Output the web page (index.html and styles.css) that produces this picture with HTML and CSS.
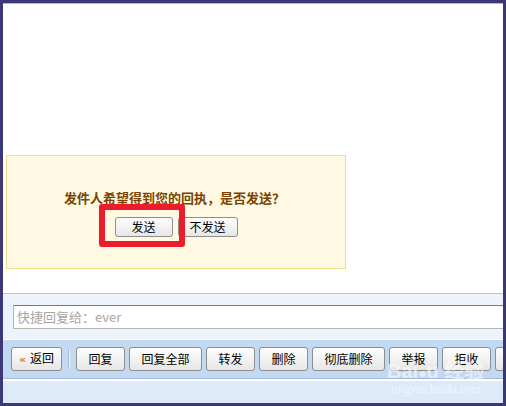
FILE: index.html
```html
<!DOCTYPE html>
<html lang="zh-CN">
  <head>
    <meta charset="UTF-8" />
    <title>回执</title>
    <link rel="stylesheet" href="styles.css">
  </head>
  <body>
    <div class="window">

      <div class="content">
        <div class="receipt-box">
          <div class="receipt-title">发件人希望得到您的回执，是否发送？</div>
          <div class="receipt-actions">
            <span class="mark-wrap">
              <button class="btn btn-send">发送</button>
              <span class="red-mark"></span>
            </span>
            <button class="btn btn-nosend">不发送</button>
          </div>
        </div>
      </div>

      <div class="quick-reply">
        <div class="reply-input">快捷回复给：ever</div>
      </div>

      <div class="toolbar">
        <button class="btn btn-back"><span class="back-arrow">«</span>返回</button>
        <span class="sep"></span>
        <button class="btn">回复</button>
        <button class="btn btn-wide">回复全部</button>
        <button class="btn">转发</button>
        <button class="btn">删除</button>
        <button class="btn btn-wide">彻底删除</button>
        <button class="btn">举报</button>
        <button class="btn">拒收</button>
        <button class="btn"></button>
        <div class="watermark">
          <span class="wm-logo">Bai<span class="paw">&#9679;</span>u 经验</span>
          <span class="wm-url">jingyan.baidu.com</span>
        </div>
      </div>

      <div class="footer-bar"></div>

    </div>
  </body>
</html>
```

FILE: styles.css
```css
* {
  box-sizing: border-box;
}
body {
  margin: 0;
  padding: 3px;
  width: 506px;
  height: 406px;
  background-color: #3c3878;
  font-family: 'Liberation Sans', 'Noto Sans CJK SC', sans-serif;
  font-size: 12px;
  overflow: hidden;
}
.window {
  height: 400px;
  display: flex;
  flex-direction: column;
  background-color: #fff;
  border-top: 1px solid #a9bde0;
  overflow: hidden;
}
.content {
  height: 289px;
  flex-shrink: 0;
  padding: 151px 0 0 3px;
}
.receipt-box {
  width: 340px;
  height: 114px;
  padding-top: 34px;
  background-color: #fff8e3;
  border: 1px solid #f5dc8c;
  display: flex;
  flex-direction: column;
  align-items: center;
}
.receipt-title {
  height: 16px;
  line-height: 16px;
  font-family: 'Noto Sans CJK SC', sans-serif;
  font-size: 13px;
  font-weight: bold;
  color: #7a4400;
  margin-left: -3px;
}
.receipt-actions {
  display: flex;
  gap: 5px;
  margin-top: 11px;
}
.mark-wrap {
  position: relative;
  display: flex;
}
.red-mark {
  position: absolute;
  left: -16px;
  top: -13px;
  width: 86px;
  height: 43px;
  border: 6px solid #ec1c2a;
  border-radius: 3px;
}
.btn {
  flex-shrink: 0;
  height: 24px;
  width: 49px;
  padding: 0;
  border: 1px solid #8e8e8e;
  border-radius: 3px;
  background: linear-gradient(#ffffff, #e6e6e6);
  font-family: 'Noto Sans CJK SC', sans-serif;
  font-size: 12px;
  color: #000;
  line-height: 20px;
}
.btn-send {
  width: 58px;
  height: 20px;
  line-height: 16px;
}
.btn-nosend {
  width: 60px;
  height: 20px;
  line-height: 16px;
}
.quick-reply {
  height: 47px;
  flex-shrink: 0;
  padding: 11px 0 0 10px;
  background-color: #edf3fb;
  border-top: 1px solid #b2c5e1;
  border-bottom: 1px solid #fff;
}
.reply-input {
  width: 500px;
  height: 24px;
  padding-left: 3px;
  line-height: 22px;
  font-family: 'Noto Sans CJK SC', sans-serif;
  font-size: 13px;
  color: #a6a6a6;
  background-color: #fff;
  border: 1px solid #b5b5b5;
  border-top-color: #7a7a7a;
}
.toolbar {
  position: relative;
  height: 39px;
  display: flex;
  align-items: center;
  gap: 4px;
  padding: 0 0 0 8px;
  background-color: #c3d9f2;
  border-bottom: 1px solid #a3b9d9;
  flex-shrink: 0;
}
.btn-back {
  width: 51px;
}
.back-arrow {
  color: #e07a10;
  font-family: 'DejaVu Sans', sans-serif;
  font-size: 11px;
  font-weight: bold;
  margin-right: 4px;
}
.sep {
  flex-shrink: 0;
  width: 2px;
  height: 18px;
  margin: 0 2px;
  border-left: 1px solid #a9b9cf;
  border-right: 1px solid #eef4fb;
}
.btn-wide {
  width: 73px;
}
.watermark {
  position: absolute;
  left: 384px;
  top: 21px;
  display: flex;
  flex-direction: column;
  align-items: center;
  color: rgba(255, 255, 255, 0.55);
  pointer-events: none;
}
.wm-logo {
  font-size: 20px;
  font-weight: bold;
  line-height: 20px;
}
.paw {
  font-size: 14px;
}
.wm-url {
  font-family: 'Liberation Serif', serif;
  font-size: 12px;
  line-height: 13px;
}
.footer-bar {
  flex: 1;
  background-color: #ddeaf9;
  border-top: 2px solid #fff;
}
```
